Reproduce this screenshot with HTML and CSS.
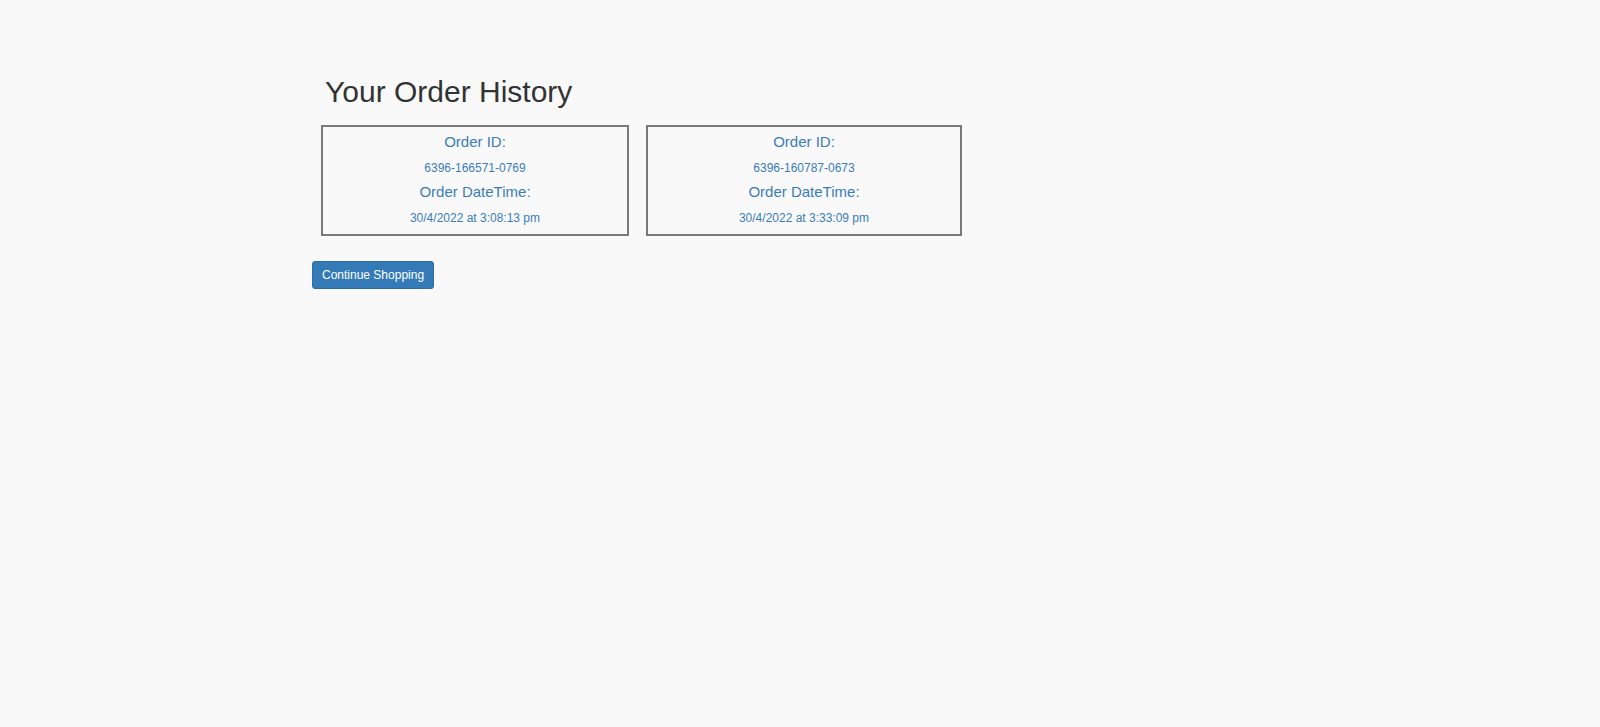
FILE: index.html
```html
<!DOCTYPE html>
<html lang="en">
<head>
<meta charset="utf-8">
<title>Your Order History</title>
<link rel="stylesheet" href="styles.css">
</head>
<body>
<main class="page">
  <h2 class="page-title">Your Order History</h2>
  <div class="orders">
    <div class="order-card order-card--a">
      <div class="order-label">Order ID:</div>
      <div class="order-value">6396-166571-0769</div>
      <div class="order-label">Order DateTime:</div>
      <div class="order-value">30/4/2022 at 3:08:13 pm</div>
    </div>
    <div class="order-card order-card--b">
      <div class="order-label">Order ID:</div>
      <div class="order-value">6396-160787-0673</div>
      <div class="order-label">Order DateTime:</div>
      <div class="order-value">30/4/2022 at 3:33:09 pm</div>
    </div>
  </div>
  <button class="btn-continue" type="button">Continue Shopping</button>
</main>
</body>
</html>
```
FILE: styles.css
```css
html, body {
  margin: 0;
  padding: 0;
  background: #f9f9f9;
}
body {
  font-family: "Liberation Sans", Arial, Helvetica, sans-serif;
  color: #333333;
  font-size: 14px;
}
.page {
  padding: 75px 0 0 312px;
}
.page-title {
  margin: 0 0 0 13px;
  font-size: 30px;
  line-height: 33px;
  font-weight: 400;
  color: #333333;
}
.orders {
  display: flex;
  gap: 17px;
  margin: 17px 0 0 9px;
}
.order-card {
  box-sizing: border-box;
  height: 111px;
  border: 2px solid #7a7a7a;
  padding: 5px 8px 0;
  text-align: center;
  color: #3a7dba;
}
.order-card--a { width: 308px; }
.order-card--b { width: 316px; }
.order-label {
  font-size: 15px;
  line-height: 20px;
}
.order-value {
  font-size: 12px;
  line-height: 17px;
  margin: 7.5px 0 5.5px;
}
.btn-continue {
  display: block;
  margin-top: 25px;
  box-sizing: border-box;
  height: 28px;
  padding: 4px 9px;
  font-family: "Liberation Sans", Arial, Helvetica, sans-serif;
  font-size: 12px;
  line-height: 18px;
  color: #ffffff;
  background: #337ab7;
  border: 1px solid #2e6da4;
  border-radius: 3px;
  cursor: pointer;
}
```
